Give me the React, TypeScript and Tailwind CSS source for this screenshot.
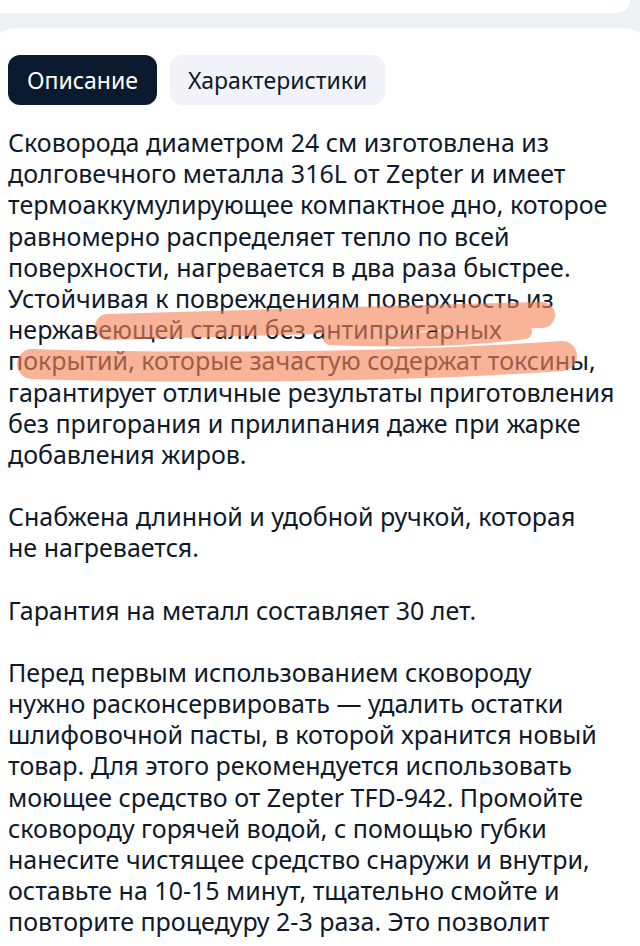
import React from 'react'

const font = { fontFamily: '"Noto Sans", "Open Sans", sans-serif' }

const paragraphs: string[][] = [
  [
    'Сковорода диаметром 24 см изготовлена из',
    'долговечного металла 316L от Zepter и имеет',
    'термоаккумулирующее компактное дно, которое',
    'равномерно распределяет тепло по всей',
    'поверхности, нагревается в два раза быстрее.',
    'Устойчивая к повреждениям поверхность из',
    'нержавеющей стали без антипригарных',
    'покрытий, которые зачастую содержат токсины,',
    'гарантирует отличные результаты приготовления',
    'без пригорания и прилипания даже при жарке',
    'добавления жиров.',
  ],
  ['Снабжена длинной и удобной ручкой, которая', 'не нагревается.'],
  ['Гарантия на металл составляет 30 лет.'],
  [
    'Перед первым использованием сковороду',
    'нужно расконсервировать — удалить остатки',
    'шлифовочной пасты, в которой хранится новый',
    'товар. Для этого рекомендуется использовать',
    'моющее средство от Zepter TFD-942. Промойте',
    'сковороду горячей водой, с помощью губки',
    'нанесите чистящее средство снаружи и внутри,',
    'оставьте на 10-15 минут, тщательно смойте и',
    'повторите процедуру 2-3 раза. Это позволит',
  ],
]

function Tabs() {
  return (
    <div className="flex gap-[13px]">
      <button className="h-[50px] px-[19px] rounded-[12px] bg-[#0b1a2e] text-white text-[23px] leading-none">
        Описание
      </button>
      <button className="h-[50px] px-[18px] rounded-[12px] bg-[#f1f3f8] text-[#0e1a2b] text-[23px] leading-none">
        Характеристики
      </button>
    </div>
  )
}

export default function App() {
  return (
    <div className="relative h-[946px] overflow-hidden bg-[#eef1f6]" style={font}>
      <div className="h-[13px] -ml-[16px] mr-[10px] rounded-b-[28px] bg-white" />
      <div className="mt-[15px] -ml-[16px] -mr-[16px] rounded-t-[34px] bg-white pl-[24px] pt-[27px] pb-10">
        <Tabs />
        <div className="mt-[22px] flex flex-col gap-[31px] text-[25px] leading-[31.2px] text-[#0e1a2b]">
          {paragraphs.map((lines, i) => (
            <p key={i}>
              {lines.map((l, j) => (
                <span key={j} className="block whitespace-nowrap">
                  {l}
                </span>
              ))}
            </p>
          ))}
        </div>
      </div>

      {/* marker highlight over the text */}
      <svg className="pointer-events-none absolute left-0 top-0" width="640" height="946" viewBox="0 0 640 946">
        <g fill="none" stroke="#f5855a" strokeLinecap="round" opacity="0.62">
          <path d="M108 327 C 230 324, 400 318, 542 315" strokeWidth="26" />
          <path d="M330 338 C 420 342, 480 338, 525 332" strokeWidth="14" />
          <path d="M32 364 C 200 369, 400 367, 562 356" strokeWidth="30" />
        </g>
      </svg>
    </div>
  )
}
